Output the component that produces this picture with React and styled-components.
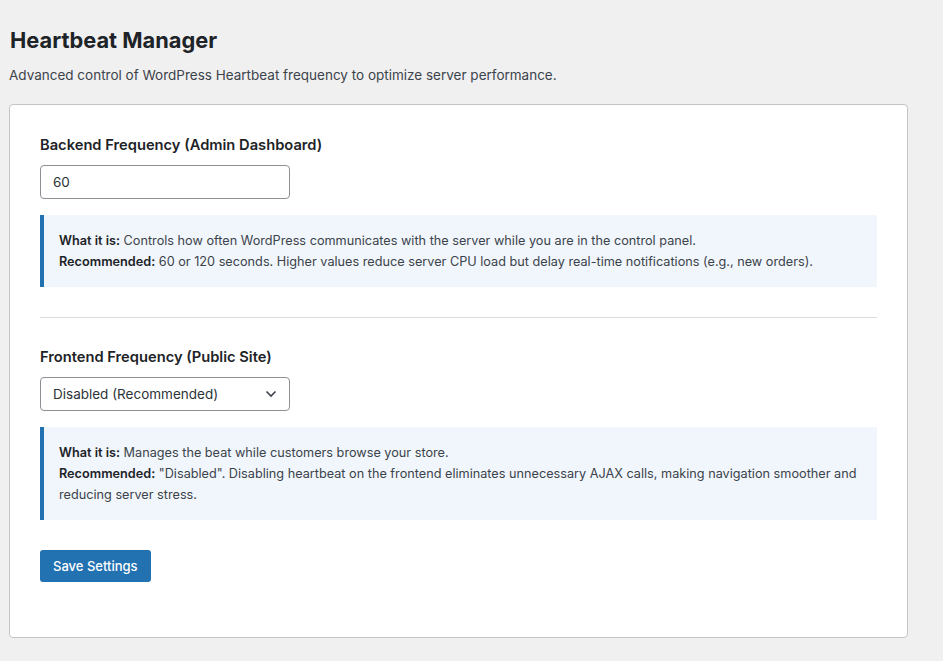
import React from "react"
import styled, { createGlobalStyle } from "styled-components"

const Global = createGlobalStyle`
  body {
    margin: 0;
    background: #f0f0f1;
    font-family: Inter, "Noto Sans", "Liberation Sans", sans-serif;
    color: #3c434a;
  }
`

const Page = styled.div`
  padding: 26px 35px 20px 9px;
`

const Title = styled.h1`
  margin: 0 0 0 1px;
  font-size: 21.8px;
  font-weight: 700;
  color: #1d2327;
  line-height: 29px;
`

const Intro = styled.p`
  margin: 10px 0 19px 0;
  font-size: 13.5px;
  line-height: 20px;
`

const Card = styled.section`
  background: #fff;
  border: 1px solid #c3c4c7;
  border-radius: 4px;
  padding: 28px 30px 55px 30px;
`

const Label = styled.label`
  display: block;
  font-size: 14.7px;
  font-weight: 600;
  color: #1d2327;
  line-height: 24px;
  margin-bottom: 8px;
`

const Input = styled.input`
  box-sizing: border-box;
  width: 250px;
  height: 34px;
  padding: 0 12px;
  border: 1px solid #8c8f94;
  border-radius: 4px;
  font: inherit;
  font-size: 13.5px;
  color: #2c3338;
`

const Select = styled.div`
  box-sizing: border-box;
  width: 250px;
  height: 34px;
  padding: 0 12px;
  border: 1px solid #8c8f94;
  border-radius: 4px;
  font-size: 13.5px;
  color: #2c3338;
  display: flex;
  align-items: center;
  justify-content: space-between;
`

const Info = styled.div`
  margin-top: 16px;
  background: #f0f6fc;
  border-left: 4px solid #2271b1;
  padding: 15px 15px;
  font-size: 12.7px;
  line-height: 21px;
  color: #3c434a;
  b { color: #1d2327; font-weight: 600; }
`

const Divider = styled.hr`
  border: 0;
  border-top: 1px solid #dcdcde;
  margin: 30px 0 27px;
`

const Button = styled.button`
  margin-top: 30px;
  background: #2271b1;
  color: #fff;
  border: 0;
  border-radius: 3px;
  height: 32px;
  padding: 0 13px;
  font: inherit;
  font-size: 13px;
  font-weight: 500;
`

export default function App() {
  return (
    <Page>
      <Global />
      <Title>Heartbeat Manager</Title>
      <Intro>Advanced control of WordPress Heartbeat frequency to optimize server performance.</Intro>
      <Card>
        <Label>Backend Frequency (Admin Dashboard)</Label>
        <Input defaultValue="60" />
        <Info>
          <b>What it is:</b> Controls how often WordPress communicates with the server while you are in the control panel.
          <br />
          <b>Recommended:</b> 60 or 120 seconds. Higher values reduce server CPU load but delay real-time notifications (e.g., new orders).
        </Info>
        <Divider />
        <Label>Frontend Frequency (Public Site)</Label>
        <Select>
          Disabled (Recommended)
          <svg width="12" height="8" viewBox="0 0 12 8">
            <path d="M1.5 1.5 L6 6 L10.5 1.5" fill="none" stroke="#3c434a" strokeWidth="1.6" />
          </svg>
        </Select>
        <Info>
          <b>What it is:</b> Manages the beat while customers browse your store.
          <br />
          <b>Recommended:</b> "Disabled". Disabling heartbeat on the frontend eliminates unnecessary AJAX calls, making navigation smoother and reducing server stress.
        </Info>
        <Button>Save Settings</Button>
      </Card>
    </Page>
  )
}
